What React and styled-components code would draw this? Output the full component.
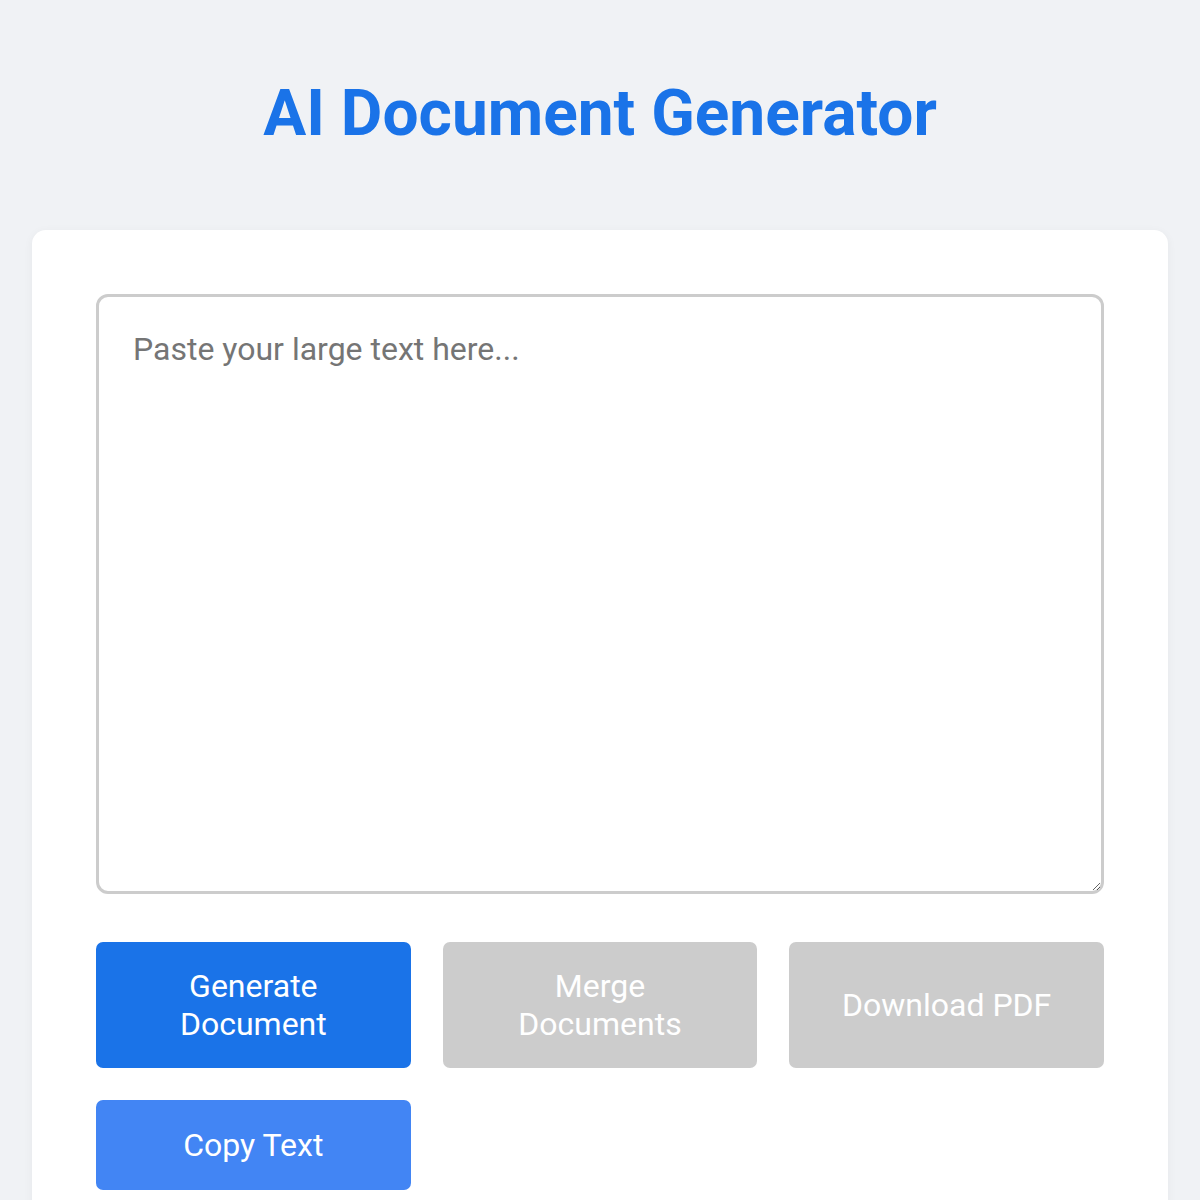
import React, { useState } from 'react'
import styled, { createGlobalStyle } from 'styled-components'

const GlobalStyle = createGlobalStyle`
    body {
        margin: 0;
        background: #f0f2f5;
        font-family: Roboto, "Liberation Sans", sans-serif;
    }
`;

function App() {
    const [text, setText] = useState('');

    return (
        <Page>
            <GlobalStyle />
            <Title>AI Document Generator</Title>
            <Card>
                <TextArea
                    placeholder="Paste your large text here..."
                    value={text}
                    onChange={(e) => setText(e.target.value)}
                />
                <Buttons>
                    <Button $variant="primary">Generate Document</Button>
                    <Button $variant="disabled" disabled>Merge Documents</Button>
                    <Button $variant="disabled" disabled>Download PDF</Button>
                    <Button $variant="light">Copy Text</Button>
                </Buttons>
            </Card>
        </Page>
    )
}

const Page = styled.div`
    padding: 0 32px 32px;
    display: flex;
    flex-direction: column;
    align-items: stretch;
`;

const Title = styled.h1`
    margin: 76px 0 79px;
    text-align: center;
    font-size: 64px;
    font-weight: 700;
    line-height: 75px;
    color: #1a73e8;
`;

const Card = styled.div`
    background: #fff;
    border-radius: 14px;
    padding: 64px;
    box-shadow: 0 2px 10px rgba(0, 0, 0, 0.05);
    display: flex;
    flex-direction: column;
    gap: 48px;
`;

const TextArea = styled.textarea`
    box-sizing: border-box;
    width: 100%;
    height: 600px;
    border: 3px solid #ccc;
    border-radius: 12px;
    padding: 33px 34px;
    font-family: Roboto, "Liberation Sans", sans-serif;
    font-size: 32px;
    color: #333;
    outline: none;
    resize: vertical;

    &::placeholder {
        color: #757575;
    }
`;

const colors = {
    primary: '#1a73e8',
    disabled: '#cccccc',
    light: '#4285f4',
};

const Buttons = styled.div`
    display: grid;
    grid-template-columns: repeat(3, 1fr);
    gap: 32px;
`;

const Button = styled.button`
    border: none;
    border-radius: 7px;
    padding: 25px 32px;
    min-height: 90px;
    background: ${(p) => colors[p.$variant]};
    color: #fff;
    font-family: Roboto, "Liberation Sans", sans-serif;
    font-size: 32px;
    line-height: 38px;
    cursor: ${(p) => (p.$variant === 'disabled' ? 'not-allowed' : 'pointer')};
`;

export default App;
